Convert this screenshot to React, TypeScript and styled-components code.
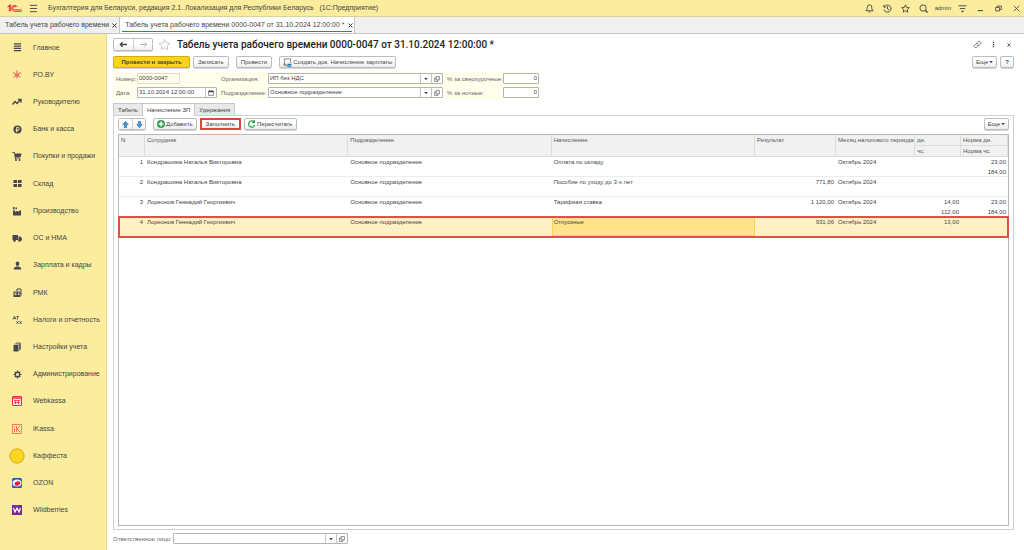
import React from "react";
import styled, { createGlobalStyle, css } from "styled-components";

const GlobalStyle = createGlobalStyle`
  * { box-sizing: border-box; }
  body { margin: 0; background: #fff; color: #444; font: 7px/10px "Liberation Sans", Arial, sans-serif; }
  button, input, select { font: inherit; color: inherit; margin: 0; }
  svg { display: block; flex: none; }
`;

const Page = styled.div`
  display: flex;
  flex-direction: column;
  min-height: 100vh;
`;

const TitleBar = styled.header`
  display: flex;
  align-items: center;
  gap: 6px;
  height: 17px;
  padding: 0 3px 0 7px;
  background: #fbec9e;
  border-bottom: 1px solid #d9d0a0;
`;

const AppName = styled.div`
  flex: 1;
  padding-left: 4px;
  white-space: pre;
`;

const IconButton = styled.button`
  display: flex;
  align-items: center;
  justify-content: center;
  width: 10px;
  height: 12px;
  padding: 0;
  border: 0;
  background: none;
  color: #444;
`;

const SystemIcons = styled.div`
  display: flex;
  align-items: center;
  gap: 8px;
`;

const UserName = styled.span`
  font-size: 6px;
  margin: 0 -2px;
`;

const TabStrip = styled.nav`
  display: flex;
  height: 17px;
  background: #f0f0f0;
  border-bottom: 1px solid #c4c4c4;
`;

const WindowTab = styled.div<{ $active?: boolean }>`
  display: flex;
  align-items: center;
  gap: 3px;
  padding: 0 2px 0 5px;
  border-right: 1px solid #c4c4c4;
  background: ${(p) => (p.$active ? "#fff" : "#f0f0f0")};
  ${(p) => p.$active && css`
    padding: 0 1px;
    background: linear-gradient(#159a52, #159a52) center bottom 1px / calc(100% - 4px) 1px no-repeat #fff;
    padding-left: 5px;
  `}
`;

const TabLink = styled.a`
  color: #444;
  text-decoration: none;
  white-space: nowrap;
`;

const CloseTab = styled.button`
  display: flex;
  padding: 0;
  border: 0;
  background: none;
  color: #333;
`;

const Body = styled.div`
  display: flex;
  flex: 1;
`;

const Sidebar = styled.nav`
  display: flex;
  flex-direction: column;
  flex: none;
  width: 107px;
  padding-bottom: 26px;
  background: #fbec9e;
  border-right: 1px solid #ecd98a;
`;

const NavItem = styled.a`
  display: flex;
  flex: 1;
  align-items: center;
  gap: 8px;
  min-height: 18px;
  padding-left: 9px;
  color: #444;
  text-decoration: none;
  white-space: nowrap;
`;

const NavIcon = styled.span`
  display: flex;
  justify-content: center;
  flex: none;
  width: 16px;
  color: #4a4550;
`;

const Main = styled.main`
  display: flex;
  flex: 1;
  flex-direction: column;
  min-width: 0;
  padding: 4px 10px 6px 6px;
  font-size: 6px;
`;

const Row = styled.div<{ $gap?: number }>`
  display: flex;
  align-items: center;
  gap: ${(p) => p.$gap ?? 6}px;
`;

const Spacer = styled.div`
  flex: 1;
`;

const Heading = styled.h1`
  margin: 0;
  padding-left: 2px;
  font: 500 10px/13px Roboto, "Liberation Sans", sans-serif;
  color: #222;
  white-space: nowrap;
`;

const CommandBar = styled(Row)`
  margin-top: 5px;
`;

const Button = styled.button<{ $primary?: boolean; $marked?: boolean; $tight?: boolean }>`
  display: flex;
  align-items: center;
  justify-content: center;
  gap: ${(p) => (p.$tight ? 1 : 2)}px;
  height: 12px;
  padding: 0 ${(p) => (p.$tight ? 3 : 4)}px;
  border: 1px solid #bcbcbc;
  border-radius: 2px;
  background: linear-gradient(#fff 40%, #ececec);
  box-shadow: 0 1px 0 #d8d8d8;
  white-space: nowrap;
  ${(p) => p.$primary && css`
    min-width: 77px;
    background: #fbd41a;
    border-color: #d3ad10;
    font-weight: 700;
  `}
  ${(p) => p.$marked && css`
    border: 2px solid #d9483f;
    border-radius: 0;
    box-shadow: none;
  `}
`;

const Split = styled.div`
  display: flex;
  border: 1px solid #bcbcbc;
  border-radius: 2px;
  box-shadow: 0 1px 0 #d8d8d8;
`;

const SplitButton = styled.button<{ $wide?: boolean }>`
  display: flex;
  align-items: center;
  justify-content: center;
  width: ${(p) => (p.$wide ? 19 : 13)}px;
  height: ${(p) => (p.$wide ? 11 : 10)}px;
  padding: 0;
  border: 0;
  background: linear-gradient(#fff 40%, #f0f0f0);
  & + & { border-left: 1px solid #d0d0d0; }
`;

const Fields = styled.div`
  display: grid;
  grid-template-columns: 23px 80px 49px 175px 58px 36px;
  align-items: center;
  align-self: flex-start;
  column-gap: 1px;
  row-gap: 3px;
  margin-top: 4px;
  padding: 1px 1px 1px 0;
  background: #ffffec;
`;

const Label = styled.label<{ $flush?: boolean }>`
  padding-left: ${(p) => (p.$flush ? 0 : 3)}px;
  color: #666;
  white-space: nowrap;
`;

const Box = styled.div<{ $width?: number; $quiet?: boolean }>`
  display: flex;
  width: ${(p) => (p.$width ? `${p.$width}px` : "100%")};
  height: 11px;
  border: 1px solid ${(p) => (p.$quiet ? "#dcdcc8" : "#b4b4b4")};
  border-radius: 1px;
  background: ${(p) => (p.$quiet ? "#ffffec" : "#fff")};
  overflow: hidden;
`;

const inputLook = css`
  flex: 1;
  min-width: 0;
  width: 0;
  height: 9px;
  padding: 0 1px;
  border: 0;
  border-radius: 0;
  outline: 0;
  background: transparent;
  line-height: 9px;
`;

const Input = styled.input<{ $right?: boolean }>`
  ${inputLook}
  text-align: ${(p) => (p.$right ? "right" : "left")};
`;

const Select = styled.select`
  ${inputLook}
  appearance: none;
`;

const BoxButton = styled.button`
  display: flex;
  align-items: center;
  justify-content: center;
  width: 11px;
  padding: 0;
  border: 0;
  border-left: 1px solid #c4c4c4;
  background: #fff;
  color: #444;
`;

const PageTabs = styled.div`
  display: flex;
  margin-top: 4px;
`;

const PageTab = styled.button<{ $active?: boolean }>`
  height: ${(p) => (p.$active ? 13 : 12)}px;
  margin: 0 0 ${(p) => (p.$active ? -1 : 0)}px -1px;
  padding: 0 4px;
  border: 1px solid #c8c8c8;
  border-bottom: 0;
  background: ${(p) => (p.$active ? "#fff" : "#e9e9e9")};
  z-index: 1;
  &:first-child { margin-left: 0; }
`;

const Panel = styled.section`
  display: flex;
  flex: 1;
  flex-direction: column;
  padding: 2px 4px 3px;
  border: 1px solid #d0d0d0;
`;

const TableFrame = styled.div`
  flex: 1;
  margin-top: 4px;
  border: 1px solid #b8b8b8;
`;

const Table = styled.table`
  width: 100%;
  table-layout: fixed;
  border-collapse: separate;
  border-spacing: 0;
`;

const Col = styled.col<{ $width?: number }>`
  ${(p) => p.$width && css`width: ${p.$width}px;`}
`;

const Th = styled.th`
  height: 11px;
  padding: 0 2px;
  border-right: 1px solid #dcdcdc;
  border-bottom: 1px solid #dcdcdc;
  background: #f1f1f1;
  color: #555;
  font-weight: 400;
  line-height: 10px;
  text-align: left;
  vertical-align: top;
  white-space: nowrap;
`;

const Record = styled.tbody<{ $selected?: boolean }>`
  ${(p) => p.$selected && css`
    background: #fff1c4;
    outline: 2px solid #dc5247;
    outline-offset: -1px;
  `}
`;

const Td = styled.td<{ $right?: boolean; $line?: boolean; $current?: boolean }>`
  height: 10px;
  padding: 1px 2px 0;
  border-bottom: ${(p) => (p.$line ? "1px solid #ececec" : "0")};
  line-height: 8px;
  text-align: ${(p) => (p.$right ? "right" : "left")};
  vertical-align: top;
  white-space: nowrap;
  ${(p) => p.$current && css`
    background: #ffe48c;
    box-shadow: inset 0 0 0 1px #f9d34a;
  `}
`;

const Footer = styled(Row)`
  margin-top: 3px;
`;

type IcoProps = { children: React.ReactNode; w?: number; h?: number };
const Ico = ({ w = 10, h = 10, children }: IcoProps) => (
  <svg width={w} height={h} viewBox="0 0 20 20" fill="none" stroke="currentColor" strokeWidth="2" aria-hidden="true">
    {children}
  </svg>
);

const Cross = ({ size = 5 }: { size?: number }) => (
  <Ico w={size} h={size}><path d="M2 2 18 18M18 2 2 18" strokeWidth="4" /></Ico>
);
const Chevron = () => (
  <Ico w={4} h={4}><path d="M1 5h18L10 16z" fill="currentColor" stroke="none" /></Ico>
);
const OpenIcon = () => (
  <Ico w={6} h={6}><path d="M7 2h11v11H7zM7 7H2v11h11v-5" strokeWidth="2" /></Ico>
);

const Logo = () => (
  <svg width="15" height="9" viewBox="0 0 45 27" fill="none" stroke="#e0383e" strokeWidth="3" aria-hidden="true">
    <path d="M1 9 7 5v17M5 6l6-4v20" />
    <path d="M31 9a9 9 0 1 0-8 13h21M27 10a5 5 0 1 0-4 7.500h21" />
  </svg>
);

const solid = { fill: "currentColor", stroke: "none" };

const sections: { name: string; icon: React.ReactNode }[] = [
  { name: "Главное", icon: <Ico w={9} h={9}><path d="M2 2h16M2 7h16M2 12h16M2 17h16" strokeWidth="2.4" /></Ico> },
  { name: "РО.BY", icon: <Ico><g stroke="#e0485a" strokeWidth="2"><path d="M10 1v18M2 5l16 10M18 5 2 15" strokeDasharray="7 2" /><path d="M6 10h8" /></g></Ico> },
  { name: "Руководителю", icon: <Ico><path d="M1 15l5-6 4 4 7-8M12 5h6v6" strokeWidth="2.8" /></Ico> },
  { name: "Банк и касса", icon: <Ico w={9} h={9}><circle cx="10" cy="10" r="9" {...solid} /><path d="M8 16V5h3a3 3 0 0 1 0 6H6M6 13h6" stroke="#fbec9e" /></Ico> },
  { name: "Покупки и продажи", icon: <Ico><path d="M1 2h4l1 3h13l-2 8H7l1 2h9v1H6L4 4H1z" {...solid} /><circle cx="8" cy="18" r="2" {...solid} /><circle cx="15" cy="18" r="2" {...solid} /></Ico> },
  { name: "Склад", icon: <Ico w={9} h={9}><path d="M1 2h8v7H1zM11 2h8v7h-8zM1 11h8v7H1zM11 11h8v7h-8z" {...solid} /></Ico> },
  { name: "Производство", icon: <Ico><path d="M2 19V9h4v3l5-3v3l7-4v11zM2 7V2h3v5zM7 7V3h3v3z" {...solid} /></Ico> },
  { name: "ОС и НМА", icon: <Ico><path d="M1 4h11v10H1zM13 7h4l3 4v4h-7z" {...solid} /><circle cx="5" cy="15" r="2.6" {...solid} /><circle cx="15" cy="15" r="2.6" {...solid} /></Ico> },
  { name: "Зарплата и кадры", icon: <Ico w={9} h={9}><ellipse cx="10" cy="6" rx="4" ry="5" {...solid} /><path d="M2 19v-4l6-3h4l6 3v4z" {...solid} /></Ico> },
  { name: "РМК", icon: <Ico><path d="M3 7h14v11H3z" {...solid} /><path d="M10 6V2h8v13M5 11h5v4H5z" stroke="#4a4550" /><path d="M5 10h4M5 13h4M12 10h3M12 13h3" stroke="#fbec9e" /></Ico> },
  { name: "Налоги и отчетность", icon: <Ico><path d="M2 9 5 2l3 7M3 7h4M9 3h5M11 3v6M9 12l4 6M13 12l-4 6M15 12l4 6M19 12l-4 6" strokeWidth="1.6" /></Ico> },
  { name: "Настройки учета", icon: <Ico><path d="M3 6h10v13H3z" {...solid} /><path d="M5 4h10v13M8 2h9v13" strokeWidth="1.5" /></Ico> },
  { name: "Администрирование", icon: <Ico w={9} h={9}><circle cx="10" cy="10" r="5" strokeWidth="3" /><path d="M10 1v4M10 15v4M1 10h4M15 10h4M4 4l3 3M13 13l3 3M16 4l-3 3M7 13l-3 3" strokeWidth="2.6" /></Ico> },
  { name: "Webkassa", icon: <Ico><rect x="1" y="1" width="18" height="18" rx="1" fill="#fde6d6" stroke="#e92c4c" /><path d="M2 4h16" stroke="#e92c4c" strokeWidth="3" /><path d="M4 9h12M4 13h12M7 8v8M13 8v8" stroke="#e92c4c" strokeWidth="1.5" /></Ico> },
  { name: "iKassa", icon: <Ico><rect x="1" y="1" width="18" height="18" stroke="#dd6a55" strokeWidth="1.6" /><path d="M5 8v8M5 4v2M9 4v12M16 4l-6 6 6 6" stroke="#dd6a55" strokeWidth="1.8" /></Ico> },
  { name: "Каффеста", icon: <Ico w={16} h={16}><circle cx="10" cy="10" r="9" fill="#fdd622" stroke="#d9a81a" strokeWidth="1.2" /></Ico> },
  { name: "OZON", icon: <Ico><rect width="20" height="20" rx="3" fill="#1f5fae" stroke="none" /><ellipse cx="10" cy="10" rx="9" ry="7" fill="#fff" stroke="none" /><ellipse cx="11" cy="11" rx="6" ry="4" fill="#ee1c4a" stroke="none" transform="rotate(-20 11 11)" /></Ico> },
  { name: "Wildberries", icon: <Ico><rect width="20" height="20" fill="#7b2a8c" stroke="none" /><path d="M3 6l3 8 4-8 4 8 3-8" stroke="#fff" strokeWidth="2.4" /></Ico> },
];

const systemIcons: { label: string; icon: React.ReactNode }[] = [
  { label: "Уведомления", icon: <Ico w={9} h={9}><path d="M2 15h16c-3-3-3-5-3-8a5 5 0 0 0-10 0c0 3 0 5-3 8zM8 18h4" /></Ico> },
  { label: "История", icon: <Ico w={9} h={9}><path d="M3 6a8 8 0 1 1-1 6M2 2v5h5M10 5v6l4 2" /></Ico> },
  { label: "Избранное", icon: <Ico w={9} h={9}><path d="M10 2l2.5 5.5 6 .7-4.500 4 1.200 6L10 15l-5.200 3.200 1.200-6-4.500-4 6-.7z" /></Ico> },
  { label: "Поиск", icon: <Ico w={9} h={9}><circle cx="9" cy="9" r="7" /><path d="M14 14l5 5" strokeWidth="3" /></Ico> },
];

const windowIcons: { label: string; icon: React.ReactNode }[] = [
  { label: "Настройки", icon: <Ico w={9} h={9}><path d="M1 4h18M4 10h12" /><path d="M6 15h8l-4 4z" {...solid} /></Ico> },
  { label: "Свернуть", icon: <Ico w={7} h={7}><path d="M2 16h15" strokeWidth="3" /></Ico> },
  { label: "Восстановить", icon: <Ico w={7} h={7}><path d="M2 7h11v10H2zM6 7V3h12v10h-5" strokeWidth="2.4" /></Ico> },
  { label: "Закрыть", icon: <Ico w={7} h={7}><path d="M2 2 18 18M18 2 2 18" strokeWidth="2.400" /></Ico> },
];

type Entry = {
  person: string; accrual: string; result?: string;
  days?: string; hours?: string; normDays?: string; normHours?: string;
};
const entries: Entry[] = [
  { person: "Кондрашина Наталья Викторовна", accrual: "Оплата по окладу", normDays: "23,00", normHours: "184,00" },
  { person: "Кондрашина Наталья Викторовна", accrual: "Пособие по уходу до 3-х лет", result: "771,80" },
  { person: "Лореонов Геннадий Георгиевич", accrual: "Тарифная ставка", result: "1 120,00", days: "14,00", hours: "112,00", normDays: "23,00", normHours: "184,00" },
  { person: "Лореонов Геннадий Георгиевич", accrual: "Отпускные", result: "931,06", days: "13,00" },
];

const Combo = ({ id, value, width }: { id: string; value: string; width?: number }) => (
  <Box $width={width}>
    <Select id={id} defaultValue={value}><option value={value}>{value}</option></Select>
    <BoxButton aria-label="Выбрать"><Chevron /></BoxButton>
    <BoxButton aria-label="Открыть"><OpenIcon /></BoxButton>
  </Box>
);

export default function App() {
  const selected = 3;
  return (
    <Page>
      <GlobalStyle />
      <TitleBar>
        <Logo />
        <IconButton aria-label="Меню"><Ico w={9} h={9}><path d="M2 3h16M2 10h16M2 17h16" /></Ico></IconButton>
        <AppName>{"Бухгалтерия для Беларуси, редакция 2.1. Локализация для Республики Беларусь   (1С:Предприятие)"}</AppName>
        <SystemIcons>
          {systemIcons.map((i) => <IconButton key={i.label} aria-label={i.label}>{i.icon}</IconButton>)}
          <UserName>admin</UserName>
          {windowIcons.map((i) => <IconButton key={i.label} aria-label={i.label}>{i.icon}</IconButton>)}
        </SystemIcons>
      </TitleBar>
      <TabStrip>
        <WindowTab>
          <TabLink href="#list">Табель учета рабочего времени</TabLink>
          <CloseTab aria-label="Закрыть вкладку"><Cross /></CloseTab>
        </WindowTab>
        <WindowTab $active>
          <TabLink href="#document">Табель учета рабочего времени 0000-0047 от 31.10.2024 12:00:00 *</TabLink>
          <CloseTab aria-label="Закрыть вкладку"><Cross /></CloseTab>
        </WindowTab>
      </TabStrip>
      <Body>
        <Sidebar>
          {sections.map((s) => (
            <NavItem key={s.name} href="#section"><NavIcon>{s.icon}</NavIcon>{s.name}</NavItem>
          ))}
        </Sidebar>
        <Main>
          <Row>
            <Split>
              <SplitButton $wide aria-label="Назад"><Ico w={9} h={9}><path d="M18 10H3M8 5l-5 5 5 5" strokeWidth="3" /></Ico></SplitButton>
              <SplitButton $wide aria-label="Вперед"><Ico w={9} h={9}><path d="M2 10h15M12 5l5 5-5 5" stroke="#aaa" /></Ico></SplitButton>
            </Split>
            <IconButton aria-label="В избранное">
              <Ico w={13} h={13}><path d="M10 2l2.500 5.500 6 .7-4.500 4 1.200 6L10 15l-5.200 3.200 1.200-6-4.500-4 6-.7z" stroke="#bbb" strokeWidth="1.200" /></Ico>
            </IconButton>
            <Heading>Табель учета рабочего времени 0000-0047 от 31.10.2024 12:00:00 *</Heading>
            <Spacer />
            <IconButton aria-label="Ссылка"><Ico w={9} h={9}><path d="M9 6l3-3a4 4 0 0 1 5 5l-4 4a4 4 0 0 1-5-1M11 14l-3 3a4 4 0 0 1-5-5l4-4a4 4 0 0 1 5 1" strokeWidth="1.600" /></Ico></IconButton>
            <IconButton aria-label="Действия"><Ico w={7} h={7}><path d="M8 2h4v4H8zM8 8h4v4H8zM8 14h4v4H8z" {...solid} /></Ico></IconButton>
            <IconButton aria-label="Закрыть"><Cross size={4} /></IconButton>
          </Row>
          <CommandBar $gap={7}>
            <Row $gap={3}>
              <Button $primary>Провести и закрыть</Button>
              <Button>Записать</Button>
            </Row>
            <Button>Провести</Button>
            <Button $tight>
              <Ico w={9} h={9}><path d="M3 18V2h14v9M1 14h7M5 17h8" stroke="#777" /><path d="M10 14h9M10 18h9" stroke="#2678bd" strokeWidth="3" /></Ico>
              Создать док. Начисление зарплаты
            </Button>
            <Spacer />
            <Row $gap={3}>
              <Button $tight>Еще <Chevron /></Button>
              <Button><b>?</b></Button>
            </Row>
          </CommandBar>
          <Fields>
            <Label htmlFor="number">Номер:</Label>
            <Box $width={43} $quiet><Input id="number" defaultValue="0000-0047" /></Box>
            <Label htmlFor="org">Организация:</Label>
            <Combo id="org" value="ИП без НДС" />
            <Label htmlFor="overtime">% за сверхурочные:</Label>
            <Box><Input id="overtime" $right defaultValue="0" /></Box>
            <Label htmlFor="date">Дата:</Label>
            <Box>
              <Input id="date" defaultValue="31.10.2024 12:00:00" />
              <BoxButton aria-label="Календарь"><Ico w={6} h={6}><path d="M2 3h16v15H2z" /><path d="M2 5h16" strokeWidth="5" /></Ico></BoxButton>
            </Box>
            <Label htmlFor="dept">Подразделение:</Label>
            <Combo id="dept" value="Основное подразделение" />
            <Label htmlFor="night">% за ночные:</Label>
            <Box><Input id="night" $right defaultValue="0" /></Box>
          </Fields>
          <PageTabs role="tablist">
            <PageTab role="tab">Табель</PageTab>
            <PageTab role="tab" $active aria-selected>Начисление ЗП</PageTab>
            <PageTab role="tab">Удержания</PageTab>
          </PageTabs>
          <Panel>
            <Row $gap={7}>
              <Split>
                <SplitButton aria-label="Вверх"><Ico w={7} h={7}><path d="M10 1l8 9h-5v9H7v-9H2z" fill="#4b97d2" stroke="#2d78b5" /></Ico></SplitButton>
                <SplitButton aria-label="Вниз"><Ico w={7} h={7}><path d="M10 19l8-9h-5V1H7v9H2z" fill="#4b97d2" stroke="#2d78b5" /></Ico></SplitButton>
              </Split>
              <Row $gap={3}>
                <Button $tight><Ico w={8} h={8}><circle cx="10" cy="10" r="10" fill="#2ba152" stroke="none" /><path d="M10 4v12M4 10h12" stroke="#fff" strokeWidth="3.600" /></Ico>Добавить</Button>
                <Button $marked>Заполнить</Button>
                <Button $tight><Ico w={8} h={8}><path d="M17 13a8 8 0 1 1-2-9M16 0v6h-6" stroke="#2ba152" strokeWidth="3" /></Ico>Пересчитать</Button>
              </Row>
              <Spacer />
              <Button $tight>Еще <Chevron /></Button>
            </Row>
            <TableFrame>
              <Table>
                <colgroup>
                  <Col $width={26} /><Col /><Col /><Col /><Col $width={81} /><Col $width={79} /><Col $width={46} /><Col $width={47} />
                </colgroup>
                <thead>
                  <tr>
                    <Th rowSpan={2}>N</Th>
                    <Th rowSpan={2}>Сотрудник</Th>
                    <Th rowSpan={2}>Подразделение</Th>
                    <Th rowSpan={2}>Начисление</Th>
                    <Th rowSpan={2}>Результат</Th>
                    <Th rowSpan={2}>Месяц налогового периода</Th>
                    <Th>дн.</Th>
                    <Th>Норма дн.</Th>
                  </tr>
                  <tr><Th>чс.</Th><Th>Норма чс.</Th></tr>
                </thead>
                {entries.map((e, i) => (
                  <Record key={i} $selected={i === selected}>
                    <tr>
                      <Td $right $line rowSpan={2}>{i + 1}</Td>
                      <Td $line rowSpan={2}>{e.person}</Td>
                      <Td $line rowSpan={2}>Основное подразделение</Td>
                      <Td $line rowSpan={2} $current={i === selected}>{e.accrual}</Td>
                      <Td $right $line rowSpan={2}>{e.result}</Td>
                      <Td $line rowSpan={2}>Октябрь 2024</Td>
                      <Td $right>{e.days}</Td>
                      <Td $right>{e.normDays}</Td>
                    </tr>
                    <tr><Td $right $line>{e.hours}</Td><Td $right $line>{e.normHours}</Td></tr>
                  </Record>
                ))}
              </Table>
            </TableFrame>
          </Panel>
          <Footer $gap={1}>
            <Label $flush htmlFor="responsible">Ответственное лицо:</Label>
            <Combo id="responsible" value="" width={175} />
          </Footer>
        </Main>
      </Body>
    </Page>
  );
}
